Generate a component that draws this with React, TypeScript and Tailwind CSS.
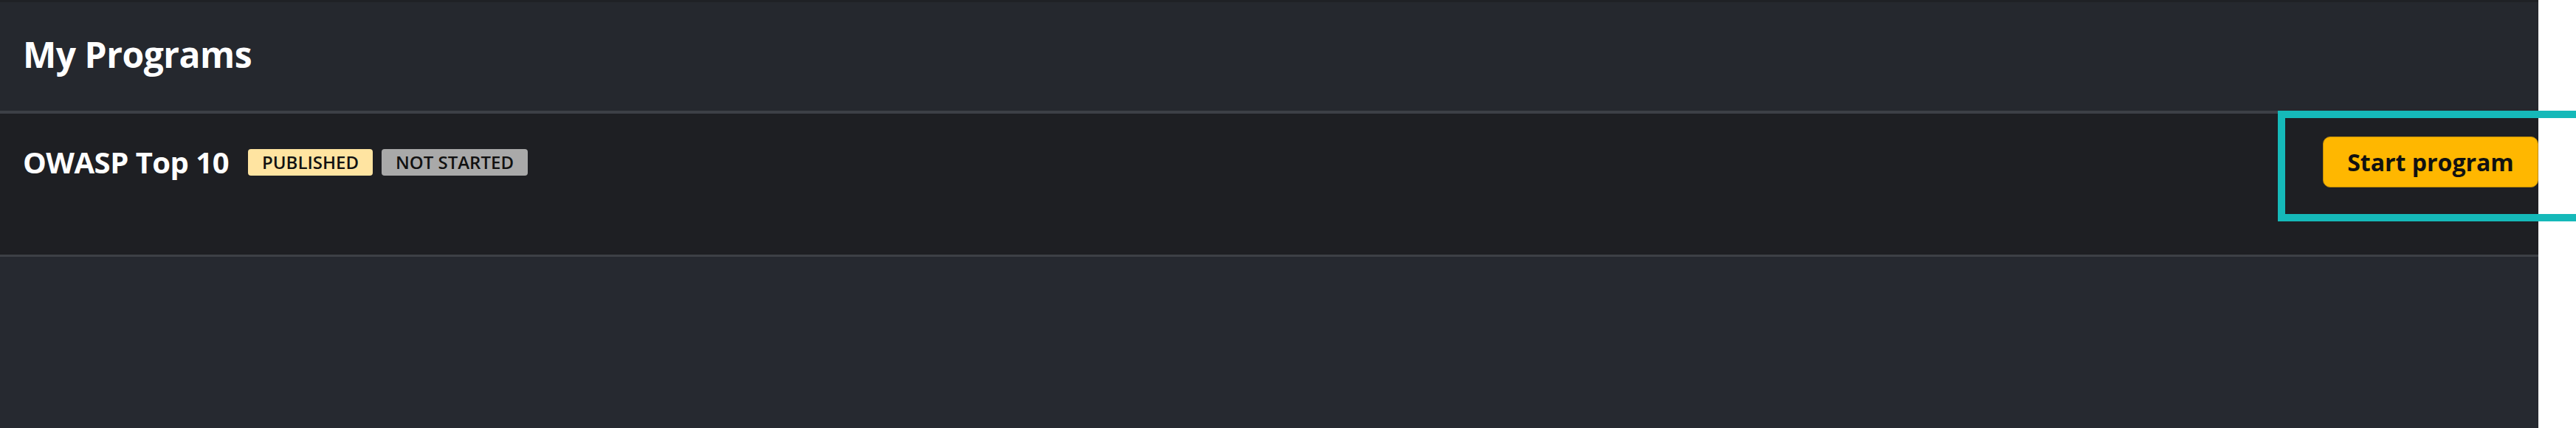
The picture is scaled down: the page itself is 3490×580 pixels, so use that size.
import React from "react";

function Badge(props: { label: string; tone: "yellow" | "gray" }) {
    return (
        <span
            className={
                "inline-flex h-[36px] items-center rounded-[4px] px-[19px] text-[24px] font-semibold leading-none text-[#111111] " +
                (props.tone === "yellow" ? "bg-[#ffe4a1]" : "bg-[#a9a9a9]")
            }
        >
            {props.label}
        </span>
    );
}

function ProgramRow(props: { title: string }) {
    return (
        <div className="flex h-[198px] items-start border-y-[3px] border-t-[4px] border-[#3d4046] bg-[#1e1f23] pl-[31px] pt-[31px]">
            <div className="flex h-[69px] flex-1 items-center">
                <h2 className="text-[40px] font-bold leading-none tracking-[-0.5px] text-white">
                    {props.title}
                </h2>
                <div className="ml-[26px] flex gap-[12px]">
                    <Badge label="PUBLISHED" tone="yellow" />
                    <Badge label="NOT STARTED" tone="gray" />
                </div>
            </div>
            <button className="flex h-[69px] w-[292px] items-center justify-center rounded-[10px] border border-[#c08c08] bg-[#ffb700] text-[32px] font-bold text-[#111111]">
                Start program
            </button>
        </div>
    );
}

export default function App() {
    return (
        <div
            className="relative flex h-[580px] w-full overflow-hidden bg-white"
            style={{ fontFamily: '"Open Sans", "Noto Sans", sans-serif' }}
        >
            <div className="flex w-[3439px] flex-col border-t-[3px] border-[#1f2125] bg-[#25282e]">
                <div className="flex h-[147px] items-center px-[31px] pb-[6px]">
                    <h1 className="text-[48px] font-bold leading-none tracking-[-0.5px] text-white">
                        My Programs
                    </h1>
                </div>
                <ProgramRow title="OWASP Top 10" />
                <div className="flex-1 bg-[#262930]" />
            </div>
            {/* highlight box drawn over the action button */}
            <div className="pointer-events-none absolute left-[3086px] top-[150px] h-[150px] w-[414px] border-[10px] border-[#15b9b9]" />
        </div>
    );
}
